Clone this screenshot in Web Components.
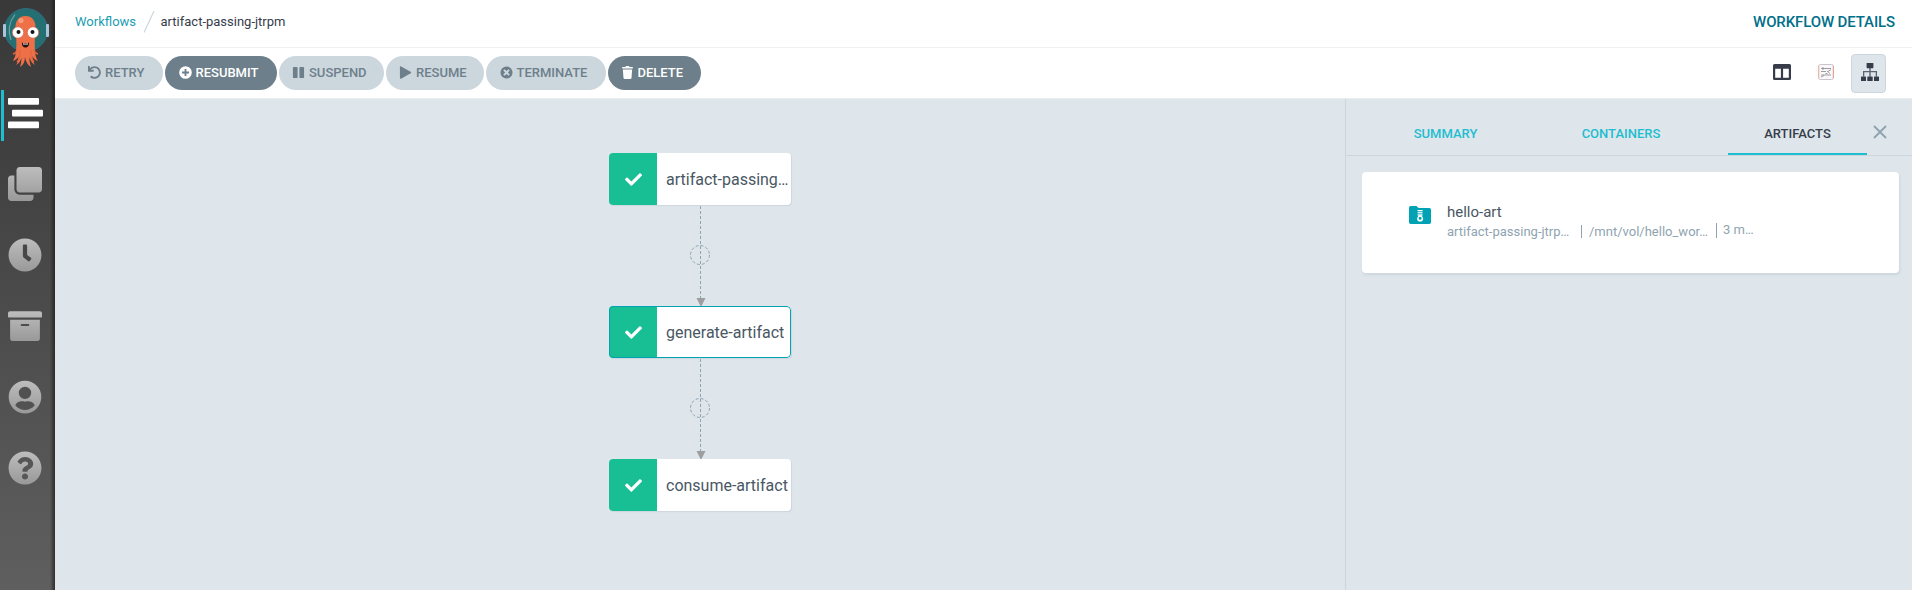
<!DOCTYPE html>
<html lang="en"><head><meta charset="utf-8"><title>Workflows</title>
<style>
html,body{margin:0;height:100%;overflow:hidden}
body{font-family:Roboto,"Liberation Sans",sans-serif;color:#495763;background:#dee6eb}
</style></head><body>
<wf-app></wf-app>
<script>
const def=(name,html,setup)=>{
  const t=document.createElement('template');t.innerHTML=html;
  customElements.define(name,class extends HTMLElement{
    constructor(){super();this.attachShadow({mode:'open'}).appendChild(t.content.cloneNode(true));}
    connectedCallback(){if(setup)setup(this,this.shadowRoot);}
  });
};
const ICONS={
 stream:['0 0 34 34','<rect x="0" y="2" width="31" height="6.8" rx="1"/><rect x="4" y="13.8" width="31" height="6.8" rx="1"/><rect x="0" y="25.4" width="31" height="6.8" rx="1"/>'],
 clone:['0 0 512 512','<path d="M464 0c26.51 0 48 21.49 48 48v288c0 26.51-21.49 48-48 48H176c-26.51 0-48-21.49-48-48V48c0-26.51 21.49-48 48-48h288M176 416c-44.112 0-80-35.888-80-80V128H48c-26.51 0-48 21.49-48 48v288c0 26.51 21.49 48 48 48h288c26.51 0 48-21.49 48-48v-48H176z"/>'],
 clock:['0 0 512 512','<path d="M256 8C119 8 8 119 8 256s111 248 248 248 248-111 248-248S393 8 256 8zm92.49 313l-20 25a16 16 0 0 1-22.49 2.5l-67-49.72a40 40 0 0 1-15-31.23V112a16 16 0 0 1 16-16h32a16 16 0 0 1 16 16v144l58 42.5a16 16 0 0 1 2.49 22.5z"/>'],
 archive:['0 0 512 512','<path d="M32 448c0 17.7 14.3 32 32 32h384c17.7 0 32-14.3 32-32V160H32v288zm160-212c0-6.600 5.400-12 12-12h104c6.600 0 12 5.400 12 12v8c0 6.600-5.400 12-12 12H204c-6.600 0-12-5.400-12-12v-8zM480 32H32C14.300 32 0 46.300 0 64v48c0 8.800 7.200 16 16 16h480c8.800 0 16-7.200 16-16V64c0-17.700-14.300-32-32-32z"/>'],
 user:['0 0 34 34','<path fill-rule="evenodd" d="M17 .8a16.300 16.300 0 1 0 0 32.600a16.300 16.300 0 1 0 0-32.600zM17 6.700a6.200 6.200 0 1 1 0 12.400a6.200 6.200 0 1 1 0-12.400zM7.200 25.200C9 21.700 12.500 20.700 17 21.800C21.500 20.700 25 21.700 26.800 25.200C24 28.500 20.500 29.900 17 29.900C13.500 29.900 10 28.500 7.200 25.200z"/>'],
 help:['0 0 512 512','<path d="M504 256c0 136.997-111.043 248-248 248S8 392.997 8 256C8 119.083 119.043 8 256 8s248 111.083 248 248zM262.655 90c-54.497 0-89.255 22.957-116.549 63.758-3.536 5.286-2.353 12.415 2.715 16.258l34.699 26.310c5.205 3.947 12.621 3.008 16.665-2.122 17.864-22.658 30.113-35.797 57.303-35.797 20.429 0 45.698 13.148 45.698 32.958 0 14.976-12.363 22.667-32.534 33.976C247.128 238.528 216 254.941 216 296v4c0 6.627 5.373 12 12 12h56c6.627 0 12-5.373 12-12v-1.333c0-28.462 83.186-29.647 83.186-106.667 0-58.002-60.165-102-116.531-102zM256 338c-25.365 0-46 20.635-46 46 0 25.364 20.635 46 46 46s46-20.636 46-46c0-25.365-20.635-46-46-46z"/>'],
 undo:['0 0 512 512','<path d="M212.333 224.333H12c-6.627 0-12-5.373-12-12V12C0 5.373 5.373 0 12 0h48c6.627 0 12 5.373 12 12v78.112C117.773 39.279 184.260 7.470 258.175 8.007c136.906.994 246.448 111.623 246.157 248.532C504.041 393.258 393.120 504 256.333 504c-64.089 0-122.496-24.313-166.510-64.215-5.099-4.622-5.334-12.554-.467-17.420l33.967-33.967c4.474-4.474 11.662-4.717 16.401-.525C170.760 415.336 211.580 432 256.333 432c97.268 0 176-78.716 176-176 0-97.267-78.716-176-176-176-58.496 0-110.280 28.476-142.274 72.333h98.274c6.627 0 12 5.373 12 12v48c0 6.627-5.373 12-12 12z"/>'],
 plus:['0 0 14 14','<path fill-rule="evenodd" d="M7 .2a6.800 6.800 0 1 0 0 13.600a6.800 6.800 0 1 0 0-13.600zM6 3.200h2V6h2.800v2H8v2.800H6V8H3.200V6H6z"/>'],
 pause:['0 0 14 14','<rect x="1" y="1" width="5" height="12" rx="1"/><rect x="8" y="1" width="5" height="12" rx="1"/>'],
 play:['0 0 14 14','<path d="M1 1.300Q1 0 2.300.5L12.500 6.100Q13.700 7 12.500 7.900L2.300 13.600Q1 14 1 12.700z"/>'],
 times:['0 0 14 14','<path fill-rule="evenodd" d="M7 .5a6.500 6.500 0 1 0 0 13a6.500 6.500 0 1 0 0-13zM4.900 3.500L7 5.500 9.100 3.500 10.500 4.900 8.500 7 10.500 9.100 9.100 10.500 7 8.500 4.900 10.500 3.500 9.100 5.500 7 3.500 4.900z"/>'],
 trash:['0 0 14 14','<path d="M1.300 1h3.500l.6-1h3.200l.6 1h3.500v1.800H1.300zM2 3.700h10l-.7 9.100Q11.200 14 10 14H4Q2.800 14 2.700 12.800z"/>'],
 check:['0 0 512 512','<path d="M173.898 439.404l-166.400-166.400c-9.997-9.997-9.997-26.206 0-36.204l36.203-36.204c9.997-9.998 26.207-9.998 36.204 0L192 312.690 432.095 72.596c9.997-9.997 26.207-9.997 36.204 0l36.203 36.204c9.997 9.997 9.997 26.206 0 36.204l-294.400 294.401c-9.998 9.997-26.207 9.997-36.204-.001z"/>'],
 columns:['0 0 18 16','<path fill-rule="evenodd" d="M1.500 0h15Q18 0 18 1.500v13Q18 16 16.500 16h-15Q0 16 0 14.500v-13Q0 0 1.500 0zM2.200 4.800v9h5.700v-9zM10.100 4.800v9h5.700v-9z"/>'],
 sitemap:['0 0 18 18','<path d="M8.300 5h1.400v3H16v5.500h-1.300V9.300H9.700v4.200H8.300V9.300H3.300v4.200H2V8h6.300z" fill="#5b6470"/><rect x="5.600" width="6.800" height="5.200" rx=".6"/><rect y="13.500" width="5" height="4.500" rx=".5"/><rect x="6.300" y="13.500" width="5.400" height="4.500" rx=".5"/><rect x="13" y="13.500" width="5" height="4.500" rx=".5"/>'],
 chart:['0 0 16 16','<rect x=".5" y=".5" width="15" height="15" rx="2" fill="#faf8fa" stroke="#c9c4cc"/><path d="M.8 2v12" stroke="#f1b99a"/><path d="M15.300 2v12" stroke="#e99b8c"/><path d="M3 4.500h10M3 7.500h5M10 7.500l3-2M3 11h10M3 13l3-1.500M5 3v3M9 7l3 2.500M7.500 9.500h2" fill="none" stroke="#8f9398" stroke-width=".9"/>'],
 close:['0 0 14 14','<path d="M1 1L13 13M13 1L1 13" fill="none" stroke="#8fa4b1" stroke-width="2"/>'],
 folder:['0 0 22 18','<path d="M1.800 0H7.500L9.500 2H20.200Q22 2 22 3.800V16.200Q22 18 20.200 18H1.800Q0 18 0 16.200V1.800Q0 0 1.800 0z" fill="#00a2b3"/><g fill="#fff"><rect x="8.600" y="4" width="5" height="1.300"/><rect x="8.600" y="6.200" width="5" height="1.200"/><rect x="8.600" y="8.300" width="5" height="1.200"/><path fill-rule="evenodd" d="M9.500 9.300h3.200l1.500 3.200a3.100 3.100 0 1 1-6.200 0zM11.100 10.800a1.500 1.500 0 1 0 0 3a1.500 1.500 0 1 0 0-3z"/></g>']
};
def('wf-icon','<style>:host{display:block;flex:none}svg{display:block;width:100%;height:100%;overflow:visible;fill:currentColor}</style><svg aria-hidden="true"></svg>',(h,r)=>{
  const s=r.querySelector('svg'),[vb,body]=ICONS[h.getAttribute('name')];
  s.setAttribute('viewBox',vb);
  s.innerHTML=h.hasAttribute('shaded')?'<defs><linearGradient id="g" x1="0" y1="0" x2="0" y2="1"><stop stop-color="#bdbdbd"/><stop offset="1" stop-color="#999"/></linearGradient></defs><g fill="url(#g)">'+body+'</g>':body;
});
def('wf-logo',`<style>:host{display:block;width:46px;height:60px;margin:8px 0 0 3px}svg{display:block}</style>
<svg width="46" height="60" viewBox="3 8 46 60"><circle cx="26" cy="30" r="21.500" fill="#246f72" stroke="#356982"/>
<path d="M15 14.500Q6 26 11 40" fill="none" stroke="#70a3a3" stroke-width="1.200"/>
<rect x="3" y="24" width="3" height="13" rx="1" fill="#a9c5dc"/><rect x="46" y="24" width="3" height="13" rx="1" fill="#a9c5dc"/>
<path d="M25.500 16C18 16 15 22 15.500 29C16 38 17 43 16 51Q16 56 13 61Q18 59 18.500 56Q18.500 62 16 65Q21 62 21.500 57Q21.500 63 20 67Q25 64 25 57Q26 64 31 67Q29 62 29.500 57Q31 63 35 65Q32 60 32.500 56Q34 60 38 61Q35 57 35 50C34.500 42 35 38 35.500 29C36 22 33 16 25.500 16z" fill="#ee7048"/>
<path d="M17 49Q17 53 13 54M34 49Q34 53 38 54M20 50Q20 60 17 62M31 50Q31 60 34 62" stroke="#e86640" fill="none" stroke-width="1.600"/>
<circle cx="21" cy="20.500" r="2.600" fill="#f69b77"/><circle cx="18" cy="32.500" r="5.700" fill="#fff" stroke="#e05a3c" stroke-width=".7"/><circle cx="33" cy="32.500" r="5.700" fill="#fff" stroke="#e05a3c" stroke-width=".7"/>
<circle cx="18.500" cy="32" r="2" fill="#151515"/><circle cx="32.500" cy="32" r="2" fill="#151515"/><path d="M21.800 42.500Q25.500 44.500 29.200 42.500Q29 47.500 25.500 47.500Q22 47.500 21.800 42.500z" fill="#241311"/><path d="M23 43.300Q25.500 44.300 28 43.300v1.200H23z" fill="#fff"/></svg>`);
def('wf-sidebar',`<style>:host{display:flex;flex-direction:column;width:55px;height:590px;background:linear-gradient(90deg,transparent 50px,rgba(28,26,22,.7) 55px),linear-gradient(#393939,#404040 25%,#5f5f5f)}
nav{display:grid;grid-auto-rows:71px;margin-top:9px}
.i{display:flex;align-items:center;padding-left:8px;color:#fff;position:relative}.i wf-icon{width:34px;height:34px}
.on::before{content:"";position:absolute;left:1px;top:13px;width:3px;height:51px;background:#1fbdd0}</style>
<wf-logo></wf-logo><nav><div class="i on"><wf-icon name="stream"></wf-icon></div><div class="i"><wf-icon shaded name="clone"></wf-icon></div><div class="i"><wf-icon shaded name="clock"></wf-icon></div><div class="i"><wf-icon shaded name="archive"></wf-icon></div><div class="i"><wf-icon shaded name="user"></wf-icon></div><div class="i"><wf-icon shaded name="help"></wf-icon></div></nav>`);
def('wf-button',`<style>:host{display:flex;box-sizing:border-box;height:34px;border-radius:17px;align-items:center;padding-left:13px;background:#6d7f8b;color:#fff;font:500 13px/34px Roboto,sans-serif;white-space:nowrap}
:host([disabled]){background:#ccd6dd;color:#6d7f8b}wf-icon{width:13px;height:13px;margin:-1px 4px 0 0}</style><wf-icon name="undo"></wf-icon><slot></slot>`,(h,r)=>{
 const old=r.querySelector('wf-icon'),n=document.createElement('wf-icon');n.setAttribute('name',h.getAttribute('icon'));old.replaceWith(n);});
def('wf-header',`<style>:host{display:block;height:99px;background:#fff;box-sizing:border-box;border-bottom:1px solid #e8edf0}
.top{display:flex;height:47px;align-items:center;border-bottom:1px solid #eef1f3;padding:0 17px 0 20px;box-sizing:content-box;font-size:13px;line-height:20px}
.top a{color:#1b9db1;margin-top:-4px}.top svg{margin:-3px 6px 0 6.500px}.cur{color:#363c4a;margin-top:-4px}
.det{margin-left:auto;margin-top:-3px;font-weight:500;font-size:15px;letter-spacing:-.12px;color:#006f8a}
.bar{display:flex;height:50px;align-items:center;padding:0 26px 0 20px;gap:2px}
.views{margin-left:auto;display:flex;align-items:center;color:#363c4a}
.sel{box-sizing:border-box;width:35px;height:39px;border:1px solid #ccd6dd;border-radius:4px;background:#dee6eb;display:grid;place-items:center}</style>
<div class="top"><a>Workflows</a><svg width="12" height="24"><path d="M1 22.500L11 1" stroke="#ccd6dd" stroke-width="1.200"/></svg><span class="cur">artifact-passing-jtrpm</span><span class="det">WORKFLOW DETAILS</span></div>
<div class="bar"><wf-button disabled icon="undo" style="width:88px">RETRY</wf-button><wf-button icon="plus" style="width:112px;padding-left:13.5px">RESUBMIT</wf-button><wf-button disabled icon="pause" style="width:105px">SUSPEND</wf-button><wf-button disabled icon="play" style="width:98px">RESUME</wf-button><wf-button disabled icon="times" style="width:120px;padding-left:13.5px">TERMINATE</wf-button><wf-button icon="trash" style="width:93px;padding-left:12.5px">DELETE</wf-button>
<div class="views"><wf-icon name="columns" style="width:18px;height:16px;margin:-2px 27px 0 0"></wf-icon><wf-icon name="chart" style="width:16px;height:16px;margin:-2px 17px 0 0"></wf-icon><div class="sel"><wf-icon name="sitemap" style="width:18px;height:18px;margin:-3px 0 0 2px"></wf-icon></div></div></div>`);
def('wf-node',`<style>:host{display:flex;box-sizing:border-box;width:182px;height:52px;border-radius:4px;background:#fff;box-shadow:1px 1px 1px #ccd6dd;overflow:hidden;font-size:16px;line-height:54px;position:relative;white-space:nowrap}
.s{width:48px;flex:none;background:#18be94;color:#fff;display:grid;place-items:center}wf-icon{width:17px;height:17px}.t{margin-left:9px}
:host([selected])::after{content:"";position:absolute;inset:0;border:1px solid #00a2b3;border-radius:4px}</style><div class="s"><wf-icon name="check"></wf-icon></div><div class="t"><slot></slot></div>`);
def('wf-edge',`<style>:host{display:block;width:182px;height:101px}svg{display:block}</style><svg width="182" height="101"><path d="M91.500 1V94" stroke="#8fa4b1" stroke-dasharray="3 2"/><circle cx="91" cy="50" r="9.500" fill="none" stroke="#8fa4b1" stroke-dasharray="3 2"/><path d="M87.500 93h9l-4.500 9z" fill="#9c9ea0"/></svg>`);
def('wf-graph',`<style>:host{display:flex;flex-direction:column;width:1290px;height:491px;box-sizing:border-box;padding:54px 0 0 554px;background:#dee6eb}</style>
<wf-node>artifact-passing…</wf-node><wf-edge></wf-edge><wf-node selected>generate-artifact</wf-node><wf-edge></wf-edge><wf-node>consume-artifact</wf-node>`);
def('wf-tabs',`<style>:host{display:flex;box-sizing:border-box;height:57px;border-bottom:1px solid #ccd6dd;padding-left:30px;font:500 13px/17px Roboto,sans-serif;color:#1fbdd0}
.t{box-sizing:border-box;width:139px;margin-right:36.500px;text-align:center;padding-top:26px}.on{color:#363c4a;border-bottom:2px solid #1fbdd0;margin:0 6px 0 1px}wf-icon{width:14px;height:14px;margin-top:26px}</style>
<div class="t">SUMMARY</div><div class="t">CONTAINERS</div><div class="t on">ARTIFACTS</div><wf-icon name="close"></wf-icon>`);
def('wf-artifact',`<style>:host{display:flex;box-sizing:border-box;width:537px;height:101px;margin:16px 0 0 16px;padding:32px 0 0 47px;background:#fff;border-radius:4px;box-shadow:1px 2px 3px #ccd6dd}
wf-icon{width:22px;height:18px;margin:2px 16px 0 0}.n{font-size:15px;line-height:17px}.m{display:flex;font-size:13px;line-height:17px;color:#8fa4b1;margin-top:2px}
.m span{box-sizing:border-box;white-space:nowrap}.b{border-left:1px solid #8fa4b1;padding-left:7px;height:13px;margin-top:2px;line-height:13px}.c{height:15px;margin-top:0;padding-left:6px}</style>
<wf-icon name="folder"></wf-icon><div><div class="n">hello-art</div><div class="m"><span style="width:134px">artifact-passing-jtrp…</span><span class="b" style="width:135px">/mnt/vol/hello_wor…</span><span class="b c">3 m…</span></div></div>`);
def('wf-panel',`<style>:host{display:block;flex:1;border-left:1px solid #ccd6dd;background:#dee6eb}</style><wf-tabs></wf-tabs><wf-artifact></wf-artifact>`);
def('wf-app',`<style>:host{display:flex;width:1912px;height:590px}main{flex:1;display:flex;flex-direction:column}section{display:flex;flex:1}</style><wf-sidebar></wf-sidebar><main><wf-header></wf-header><section><wf-graph></wf-graph><wf-panel></wf-panel></section></main>`);
</script></body></html>
